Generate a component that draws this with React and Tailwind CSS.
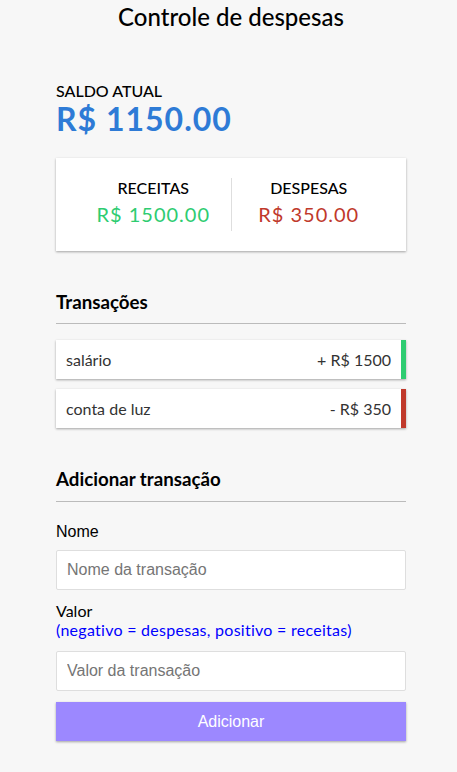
import { useState } from "react";

const transactions = [
  { id: 1, text: "salário", amount: 1500 },
  { id: 2, text: "conta de luz", amount: -350 },
];

const shadow = "shadow-[0_1px_3px_rgba(0,0,0,0.12),0_1px_2px_rgba(0,0,0,0.24)]";

export default function App() {
  const [name, setName] = useState("");
  const [value, setValue] = useState("");

  return (
    <div className="min-h-screen bg-[#f7f7f7] font-['Lato',sans-serif] text-[16px] leading-[1.2] text-black">
      <div className="ml-[56px] w-[350px] pt-[3px] pb-[30px]">
        <h2 className="text-center text-[24px] font-medium">Controle de despesas</h2>

        <h4 className="mt-[49px] font-medium uppercase">Saldo atual</h4>
        <h1 className="text-[32px] font-bold tracking-[1px] text-[#2e7bd6]">R$ 1150.00</h1>

        <div className={`mt-[20px] flex bg-white p-5 ${shadow}`}>
          <div className="flex-1 border-r border-[#dedede] text-center">
            <h4 className="font-medium uppercase">Receitas</h4>
            <p className="my-[5px] text-[20px] leading-[23px] tracking-[1px] text-[#2ecc71]">R$ 1500.00</p>
          </div>
          <div className="flex-1 text-center">
            <h4 className="font-medium uppercase">Despesas</h4>
            <p className="my-[5px] text-[20px] leading-[23px] tracking-[1px] text-[#c0392b]">R$ 350.00</p>
          </div>
        </div>

        <h3 className="mt-10 border-b border-[#bbb] pb-[10px] text-[18.72px] font-bold">Transações</h3>
        <ul className="mt-4">
          {transactions.map((t) => (
            <li
              key={t.id}
              className={`mb-[10px] flex justify-between border-r-[5px] bg-white p-[10px] text-[#333] ${shadow} ${
                t.amount < 0 ? "border-[#c0392b]" : "border-[#2ecc71]"
              }`}
            >
              {t.text}
              <span>
                {t.amount < 0 ? "-" : "+"} R$ {Math.abs(t.amount)}
              </span>
            </li>
          ))}
        </ul>

        <h3 className="mt-10 border-b border-[#bbb] pb-[10px] text-[18.72px] font-bold">
          Adicionar transação
        </h3>
        <form>
          <label className="mt-[20px] mb-[9px] block font-['Liberation_Sans',sans-serif]">Nome</label>
          <input
            type="text"
            value={name}
            onChange={(e) => setName(e.target.value)}
            placeholder="Nome da transação"
            className="block w-full rounded-[2px] border border-[#dedede] bg-white p-[10px] font-['Liberation_Sans',sans-serif] text-[16px] leading-[normal] placeholder:text-[#757575] focus:outline-none"
          />
          <label className="mt-[11px] mb-[12px] block">
            Valor
            <span className="block tracking-[0.27px] text-[#0000ff]">
              (negativo = despesas, positivo = receitas)
            </span>
          </label>
          <input
            type="number"
            value={value}
            onChange={(e) => setValue(e.target.value)}
            placeholder="Valor da transação"
            className="block w-full rounded-[2px] border border-[#dedede] bg-white p-[10px] font-['Liberation_Sans',sans-serif] text-[16px] leading-[normal] placeholder:text-[#757575] focus:outline-none"
          />
          <button
            type="button"
            className={`mt-[11px] mb-[30px] block h-[39px] w-full bg-[#9c88ff] px-[10px] font-['Liberation_Sans',sans-serif] text-[16px] leading-[normal] text-white ${shadow}`}
          >
            Adicionar
          </button>
        </form>
      </div>
    </div>
  );
}
